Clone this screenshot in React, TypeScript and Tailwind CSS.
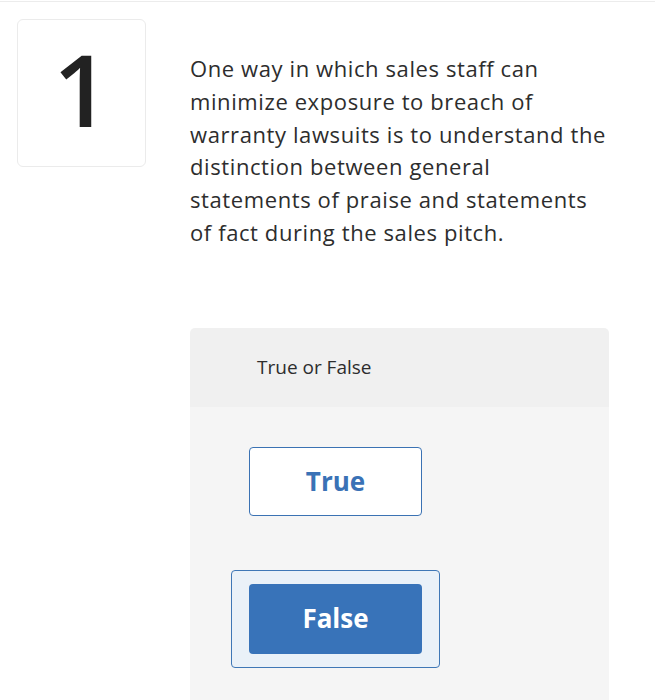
const font = { fontFamily: "'Open Sans', Lato, sans-serif" };

export default function App() {
  return (
    <div className="h-[700px] overflow-hidden bg-white pt-px text-[#2d2d2d]" style={font}>
      <div className="border-t border-[#ececec]" />
      <div className="flex pt-[17px]">
        <div className="ml-[17px] flex h-[148px] w-[129px] shrink-0 items-center justify-center rounded-[6px] border border-[#ebebeb] bg-white">
          <span className="-mt-[10px] text-[100px] font-semibold leading-none text-[#222]">1</span>
        </div>
        <div className="ml-[44px] w-[421px]">
          <p className="pt-[33px] text-[22px] leading-[32.8px] tracking-[0.6px]">
            One way in which sales staff can minimize exposure to breach of warranty lawsuits is to understand the distinction between general statements of praise and statements of fact during the sales pitch.
          </p>
          <div className="mt-[79px] w-[419px] overflow-hidden rounded-t-[5px]">
            <div className="flex h-[79px] items-center bg-[#f0f0f0] pl-[67px] text-[19px]">True or False</div>
            <div className="flex flex-col items-start bg-[#f5f5f5] pb-[80px] pl-[41px] pt-[40px]">
              <button className="ml-[18px] flex h-[69px] w-[173px] items-center justify-center rounded-[4px] border border-[#3b72b3] bg-white text-[26px] font-bold text-[#3a72b6]">
                True
              </button>
              <div className="mt-[54px] rounded-[4px] border border-[#3f77b6] bg-[#eaf1f8] px-[17px] py-[13px]">
                <button className="flex h-[70px] w-[173px] items-center justify-center rounded-[4px] bg-[#3873b9] text-[26px] font-bold text-white">
                  False
                </button>
              </div>
            </div>
          </div>
        </div>
      </div>
    </div>
  );
}
